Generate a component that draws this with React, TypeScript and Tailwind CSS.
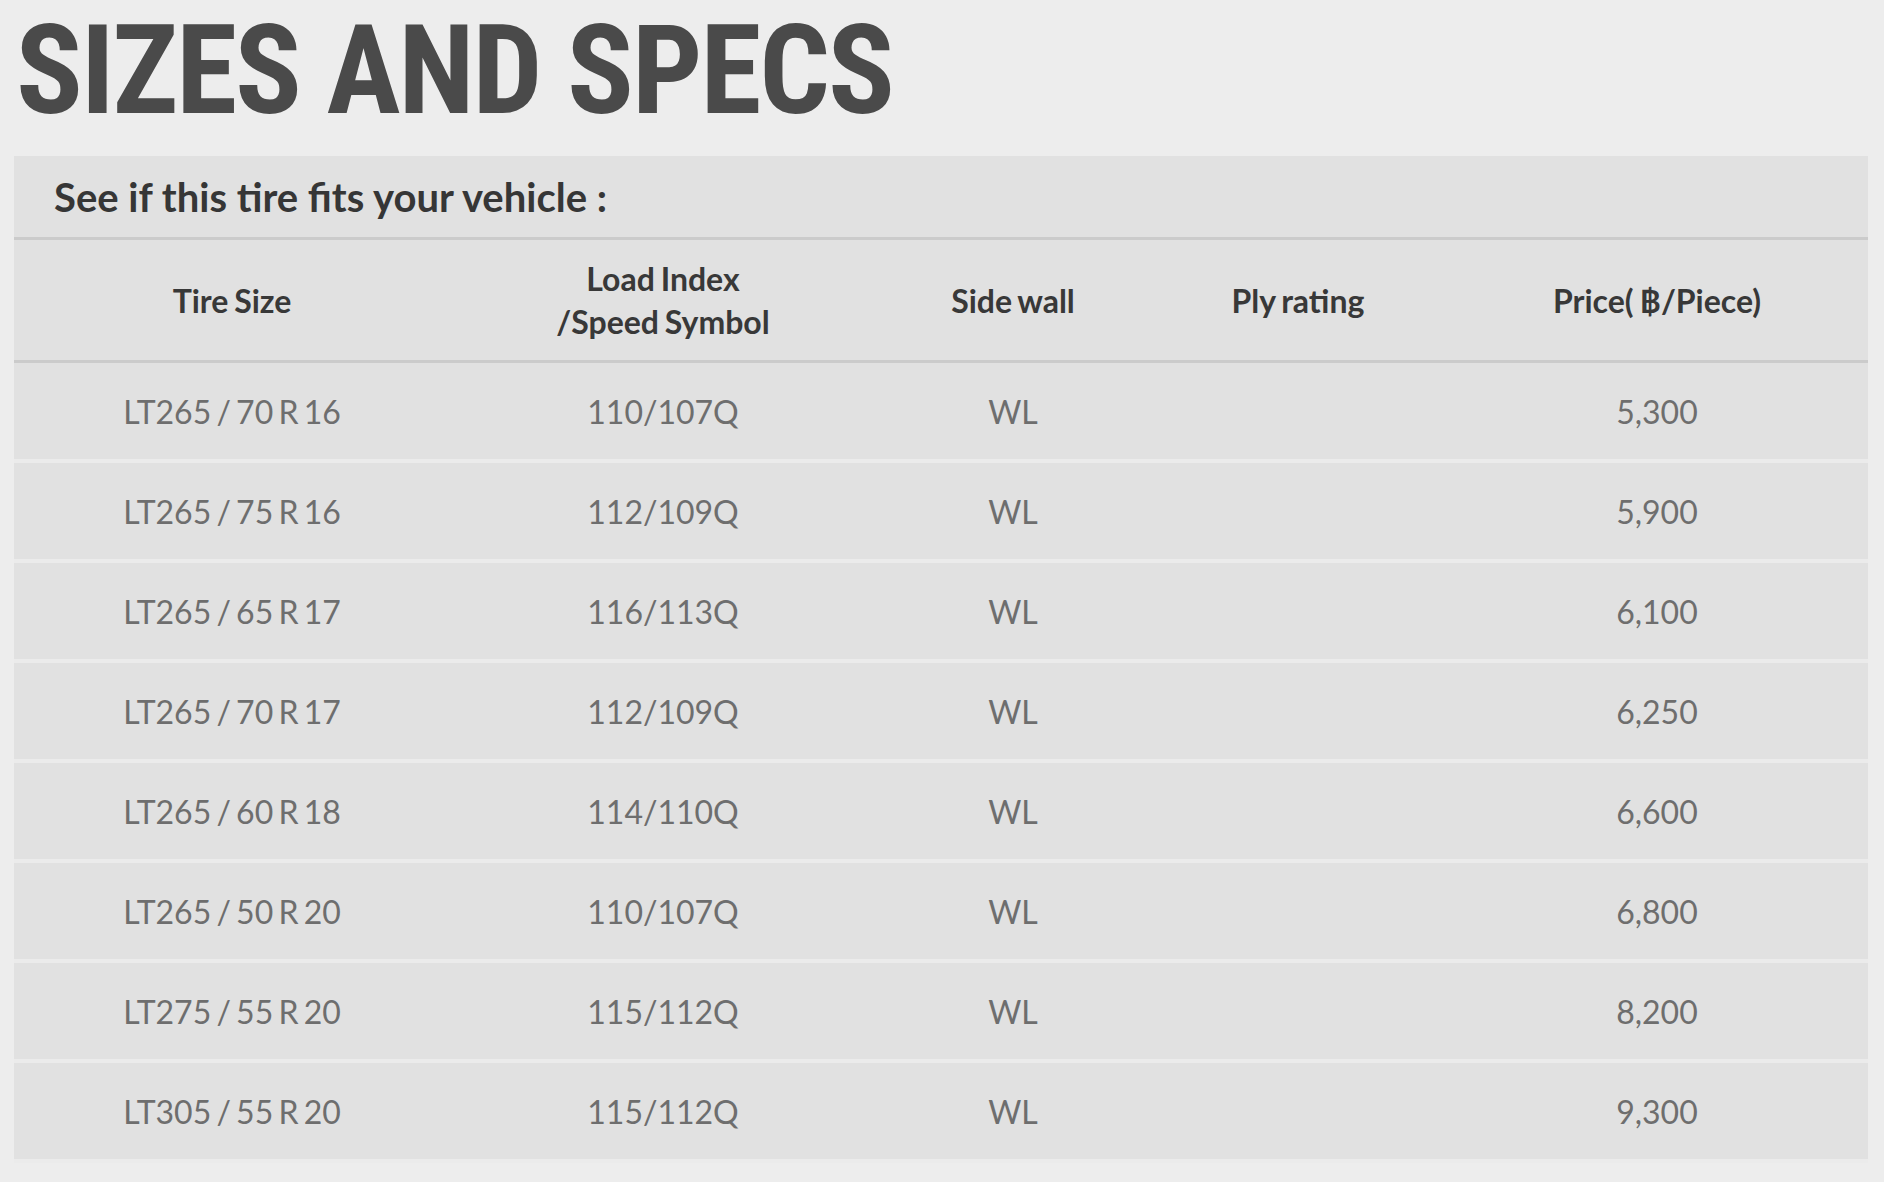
import React from 'react';

interface TireRow {
  size: string;
  load: string;
  sidewall: string;
  ply: string;
  price: string;
}

const ROWS: TireRow[] = [
  { size: 'LT265 / 70 R 16', load: '110/107Q', sidewall: 'WL', ply: '', price: '5,300' },
  { size: 'LT265 / 75 R 16', load: '112/109Q', sidewall: 'WL', ply: '', price: '5,900' },
  { size: 'LT265 / 65 R 17', load: '116/113Q', sidewall: 'WL', ply: '', price: '6,100' },
  { size: 'LT265 / 70 R 17', load: '112/109Q', sidewall: 'WL', ply: '', price: '6,250' },
  { size: 'LT265 / 60 R 18', load: '114/110Q', sidewall: 'WL', ply: '', price: '6,600' },
  { size: 'LT265 / 50 R 20', load: '110/107Q', sidewall: 'WL', ply: '', price: '6,800' },
  { size: 'LT275 / 55 R 20', load: '115/112Q', sidewall: 'WL', ply: '', price: '8,200' },
  { size: 'LT305 / 55 R 20', load: '115/112Q', sidewall: 'WL', ply: '', price: '9,300' },
];

// fixed column widths, taken from the layout
const COLS = ['w-[436px]', 'w-[426px]', 'w-[274px]', 'w-[296px]', 'flex-1'];

export default function App() {
  return (
    <div className="min-h-screen bg-[#ededed] font-['Lato','Open_Sans',sans-serif]">
      <h1 className="pl-[16px] pt-[6px] h-[156px] text-[124px] leading-[130px] font-bold tracking-[-2px] text-[#4a4a4a] font-['Roboto_Condensed','Liberation_Sans_Narrow','DejaVu_Sans_Condensed',sans-serif]">
        SIZES AND SPECS
      </h1>

      <div className="mx-[14px] w-[1854px] bg-[#e1e1e1]">
        {/* Caption */}
        <div className="h-[84px] border-b-[3px] border-[#cbcbcb] flex items-center pl-[40px]">
          <span className="text-[40px] font-bold text-[#363636]">See if this tire fits your vehicle :</span>
        </div>

        {/* Header */}
        <div className="flex h-[123px] border-b-[3px] border-[#cbcbcb] text-[32px] font-bold text-[#383838] leading-[43px] [word-spacing:-2px]">
          <div className={`${COLS[0]} flex items-center justify-center text-center`}>Tire Size</div>
          <div className={`${COLS[1]} flex items-center justify-center text-center`}>
            Load Index
            <br />
            /Speed Symbol
          </div>
          <div className={`${COLS[2]} flex items-center justify-center text-center`}>Side wall</div>
          <div className={`${COLS[3]} flex items-center justify-center text-center`}>Ply rating</div>
          <div className={`${COLS[4]} flex items-center justify-center text-center`}>Price( ฿/Piece)</div>
        </div>

        {/* Body */}
        {ROWS.map(row => (
          <div key={row.size} className="flex h-[100px] border-b-[4px] border-[#ebebeb] pt-[2px] text-[32px] text-[#6e6e6e] [word-spacing:-3px]">
            <div className={`${COLS[0]} flex items-center justify-center`}>{row.size}</div>
            <div className={`${COLS[1]} flex items-center justify-center`}>{row.load}</div>
            <div className={`${COLS[2]} flex items-center justify-center`}>{row.sidewall}</div>
            <div className={`${COLS[3]} flex items-center justify-center`}>{row.ply}</div>
            <div className={`${COLS[4]} flex items-center justify-center`}>{row.price}</div>
          </div>
        ))}
      </div>
    </div>
  );
}
